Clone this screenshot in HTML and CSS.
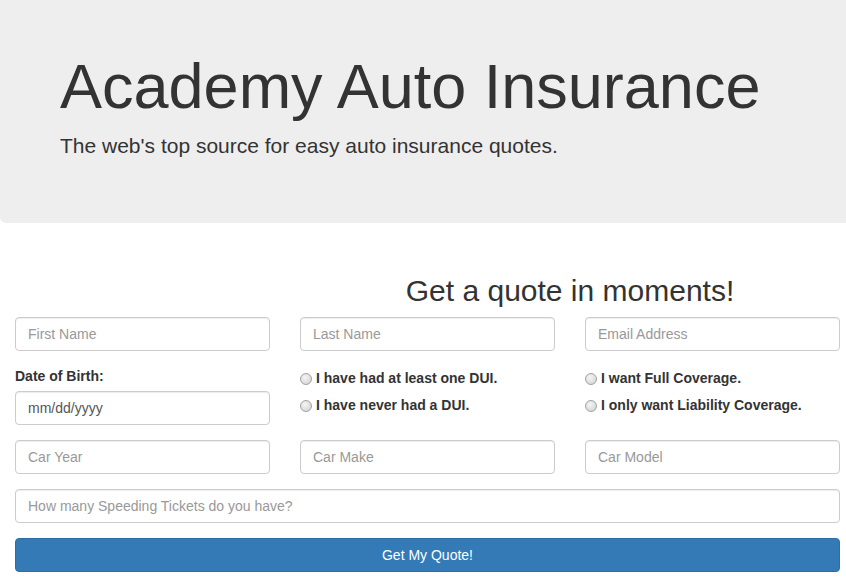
FILE: index.html
```html
<!DOCTYPE html>
<html lang="en">
<head>
<meta charset="utf-8">
<title>Academy Auto Insurance</title>
<link rel="stylesheet" href="styles.css">
</head>
<body>
<div class="page">
  <header class="jumbotron">
    <h1 class="title">Academy Auto Insurance</h1>
    <p class="lead">The web's top source for easy auto insurance quotes.</p>
  </header>
  <main class="main">
    <form class="quote-form">
      <h2 class="form-title">Get a quote in moments!</h2>
      <input class="field" type="text" placeholder="First Name">
      <input class="field" type="text" placeholder="Last Name">
      <input class="field" type="email" placeholder="Email Address">

      <div class="dob">
        <label class="dob-label" for="dob">Date of Birth:</label>
        <input class="field field-value" id="dob" type="text" value="mm/dd/yyyy">
      </div>
      <div class="radios">
        <label class="radio"><input class="radio-input" type="radio" name="dui"><span>I have had at least one DUI.</span></label>
        <label class="radio"><input class="radio-input" type="radio" name="dui"><span>I have never had a DUI.</span></label>
      </div>
      <div class="radios">
        <label class="radio"><input class="radio-input" type="radio" name="coverage"><span>I want Full Coverage.</span></label>
        <label class="radio"><input class="radio-input" type="radio" name="coverage"><span>I only want Liability Coverage.</span></label>
      </div>

      <input class="field" type="text" placeholder="Car Year">
      <input class="field" type="text" placeholder="Car Make">
      <input class="field" type="text" placeholder="Car Model">

      <input class="field field-wide" type="text" placeholder="How many Speeding Tickets do you have?">
      <button class="submit" type="button">Get My Quote!</button>
    </form>
  </main>
</div>
</body>
</html>
```

FILE: styles.css
```css
* {
  box-sizing: border-box;
}

html, body {
  margin: 0;
  padding: 0;
  overflow: hidden;
  background: #fff;
}

body {
  font-family: "Liberation Sans", Arial, sans-serif;
  font-size: 14px;
  line-height: 20px;
  color: #333;
}

.page {
  width: 855px;
}

.jumbotron {
  background: #eeeeee;
  padding: 52px 60px 62px;
  border-bottom-left-radius: 6px;
}

.title {
  margin: 0 0 10px;
  font-size: 63px;
  line-height: 69.3px;
  font-weight: normal;
  color: #333;
}

.lead {
  margin: 0;
  font-size: 21px;
  line-height: 30px;
  font-weight: normal;
}

.main {
  padding: 0 15px;
}

.quote-form {
  display: grid;
  grid-template-columns: repeat(3, 1fr);
  column-gap: 30px;
  row-gap: 15px;
}

.form-title {
  grid-column: 2 / 4;
  margin: 51px 0 -5px;
  font-size: 30px;
  line-height: 33px;
  font-weight: normal;
  text-align: center;
  color: #333;
}

.field {
  display: block;
  width: 100%;
  height: 34px;
  padding: 6px 12px;
  font-family: inherit;
  font-size: 14px;
  line-height: 20px;
  color: #555;
  background: #fff;
  border: 1px solid #ccc;
  border-radius: 4px;
  box-shadow: inset 0 1px 1px rgba(0, 0, 0, 0.075);
  outline: none;
}

.field::placeholder {
  color: #999;
}

.field-wide {
  grid-column: 1 / 4;
}

.dob-label {
  display: block;
  margin-bottom: 5px;
  font-weight: bold;
}

.radios {
  display: flex;
  flex-direction: column;
  gap: 7px;
  padding-top: 2px;
}

.radio {
  display: flex;
  align-items: center;
  gap: 4px;
  font-weight: bold;
  font-size: 14px;
  line-height: 20px;
}

.radio-input {
  appearance: none;
  -webkit-appearance: none;
  margin: 1px 0 0;
  width: 12px;
  height: 12px;
  flex: none;
  border-radius: 50%;
  border: 1px solid #a2a2a2;
  background: radial-gradient(circle at 40% 35%, #f4f4f4 0%, #e0e0e0 55%, #cfcfcf 100%);
}

.submit {
  grid-column: 1 / 4;
  height: 34px;
  padding: 6px 12px;
  font-family: inherit;
  font-size: 14px;
  line-height: 20px;
  color: #fff;
  background: #337ab7;
  border: 1px solid #2e6da4;
  border-radius: 4px;
  cursor: pointer;
}
```
